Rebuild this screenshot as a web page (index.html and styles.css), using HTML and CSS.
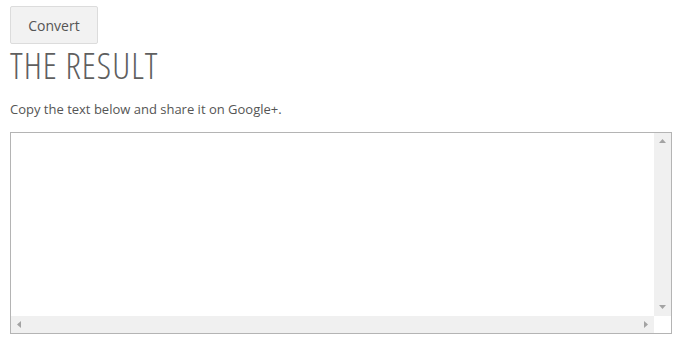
FILE: index.html
```html
<!DOCTYPE html>
<html>
<head>
<meta charset="utf-8">
<link rel="stylesheet" href="styles.css">
</head>
<body>
<div class="page">
  <button class="btn" type="button">Convert</button>
  <h1 class="title">THE RESULT</h1>
  <p class="hint">Copy the text below and share it on Google+.</p>
  <div class="box">
    <textarea class="output" wrap="off"></textarea>
    <div class="vbar">
      <svg class="arrow" width="7" height="4" viewBox="0 0 7 4"><polygon points="3.5,0 7,4 0,4" fill="#a3a3a3"/></svg>
      <svg class="arrow" width="7" height="4" viewBox="0 0 7 4"><polygon points="0,0 7,0 3.5,4" fill="#a3a3a3"/></svg>
    </div>
    <div class="hbar">
      <svg class="arrow" width="4" height="7" viewBox="0 0 4 7"><polygon points="4,0 4,7 0,3.5" fill="#a3a3a3"/></svg>
      <svg class="arrow" width="4" height="7" viewBox="0 0 4 7"><polygon points="0,0 4,3.5 0,7" fill="#a3a3a3"/></svg>
    </div>
    <div class="corner"></div>
  </div>
</div>
</body>
</html>
```
FILE: styles.css
```css
html, body {
  margin: 0;
  padding: 0;
  background: #fff;
}
body {
  font-family: "Open Sans", "Liberation Sans", sans-serif;
  color: #555;
}
.page {
  padding: 6px 10px 0 10px;
  display: flex;
  flex-direction: column;
  align-items: flex-start;
}
.btn {
  width: 88px;
  height: 38px;
  border: 1px solid #dcdcdc;
  border-radius: 2px;
  background: #f2f2f2;
  font-family: "Open Sans", sans-serif;
  font-size: 14px;
  color: #555;
  padding: 0;
  margin: 0;
}
.title {
  margin: 2px 0 0 0;
  font-family: "Open Sans", sans-serif;
  font-weight: 300;
  font-stretch: 75%;
  font-size: 36px;
  line-height: 40px;
  color: #5f5f5f;
  letter-spacing: 1px;
}
.hint {
  margin: 14px 0 0 0;
  font-size: 13px;
  line-height: 18px;
  color: #555;
}
.box {
  margin-top: 14px;
  width: 662px;
  height: 202px;
  box-sizing: border-box;
  border: 1px solid #b4b4b4;
  display: grid;
  grid-template-columns: 1fr 17px;
  grid-template-rows: 1fr 17px;
}
.output {
  border: none;
  resize: none;
  overflow: hidden;
  padding: 0;
  margin: 0;
  outline: none;
  width: 100%;
  height: 100%;
  box-sizing: border-box;
}
.vbar {
  background: #f0f0f0;
  display: flex;
  flex-direction: column;
  justify-content: space-between;
  align-items: center;
  padding: 6px 0 7px 0;
}
.hbar {
  background: #f0f0f0;
  display: flex;
  justify-content: space-between;
  align-items: center;
  padding: 0 6px 0 6px;
}
.corner {
  background: #fff;
}
.arrow {
  display: block;
}
```
